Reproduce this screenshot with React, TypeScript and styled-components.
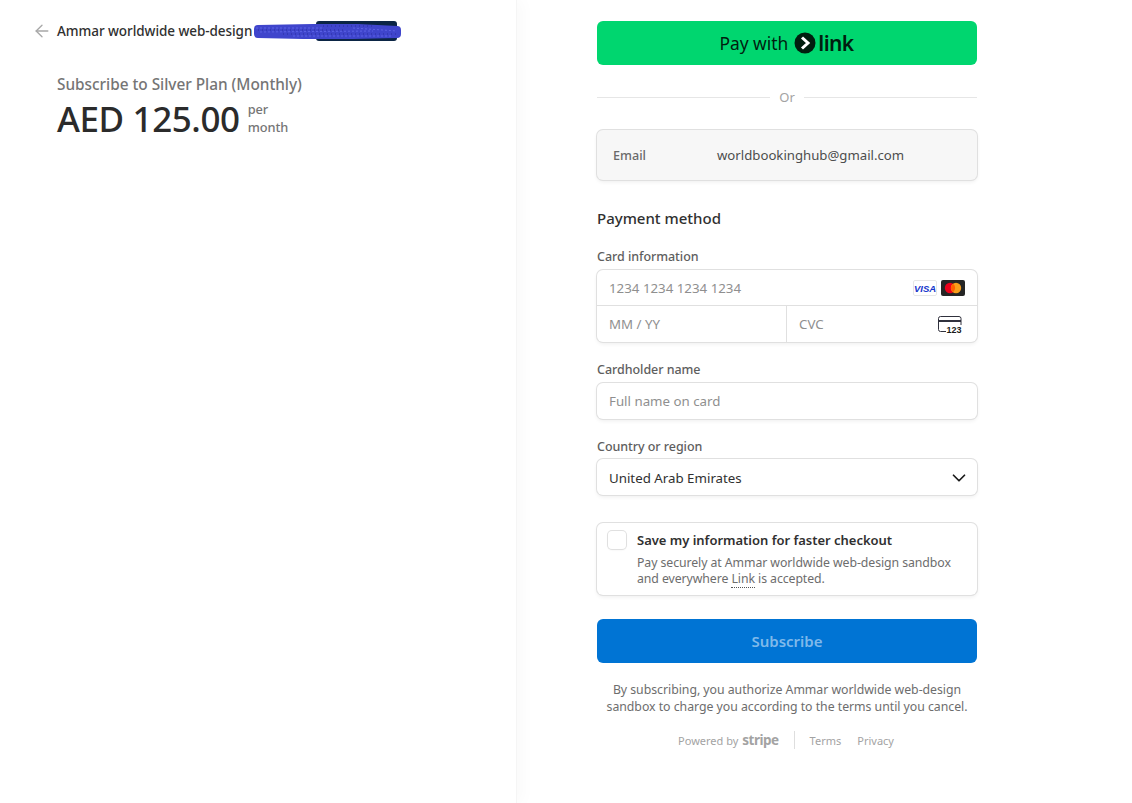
import styled, { createGlobalStyle } from "styled-components";
import { ArrowLeft, ChevronDown } from "lucide-react";

const GlobalStyle = createGlobalStyle`
	html, body {
		margin: 0;
		padding: 0;
		background: #fff;
		font-family: "Noto Sans", "Open Sans", sans-serif;
		-webkit-font-smoothing: antialiased;
	}
	* {
		box-sizing: border-box;
	}
`;

const Page = styled.div`
	display: flex;
	width: 1132px;
	height: 803px;
	overflow: hidden;
`;

const Summary = styled.aside`
	width: 517px;
	flex: none;
	padding: 21px 0 0 32px;
	box-shadow: 6px 0 14px rgba(0, 0, 0, 0.022);
	border-right: 1px solid #f5f5f5;
`;

const Merchant = styled.div`
	display: flex;
	align-items: center;
	height: 20px;
	gap: 7px;
	color: #303030;
	font-size: 13.5px;
	font-weight: 500;
	letter-spacing: -0.06px;
	white-space: nowrap;
`;

const BackIcon = styled(ArrowLeft)`
	color: #a8a8a8;
	flex: none;
	margin-right: -2px;
`;

const Scribble = styled.svg`
	flex: none;
	margin-left: -6px;
`;

const Product = styled.div`
	margin: 33px 0 0 25px;
`;

const ProductName = styled.div`
	color: #757575;
	font-size: 15.4px;
	font-weight: 500;
	line-height: 22px;
	letter-spacing: -0.03px;
`;

const PriceRow = styled.div`
	display: flex;
	align-items: center;
	gap: 8px;
	margin-top: 4px;
`;

const Price = styled.div`
	color: #2b2b2b;
	font-size: 35px;
	font-weight: 500;
	line-height: 38px;
	letter-spacing: -0.4px;
`;

const Per = styled.div`
	color: #757575;
	font-size: 12.8px;
	font-weight: 500;
	line-height: 18px;
	letter-spacing: -0.1px;
	width: 44px;
	margin-top: -2px;
`;

const Main = styled.main`
	flex: 1;
	padding: 21px 0 0 80px;
`;

const Column = styled.div`
	display: flex;
	flex-direction: column;
	width: 380px;
`;

const LinkButton = styled.div`
	display: flex;
	align-items: center;
	justify-content: center;
	gap: 6px;
	height: 44px;
	border-radius: 6px;
	background: #00d66f;
	color: #011e0f;
	font-size: 17.4px;
	padding-right: 1px;
`;

const LinkWord = styled.span`
	font-size: 21px;
	font-weight: 600;
	letter-spacing: -0.6px;
	line-height: 24px;
	margin-left: -4px;
`;

const Divider = styled.div`
	display: flex;
	align-items: center;
	gap: 9px;
	height: 20px;
	margin-top: 22px;
	color: #a3a3a3;
	font-size: 13px;
	&::before,
	&::after {
		content: "";
		flex: 1;
		height: 1px;
		background: #e6e6e6;
	}
`;

const EmailBox = styled.div`
	display: flex;
	align-items: center;
	height: 50px;
	margin-top: 23px;
	padding: 0 16px;
	border-radius: 6px;
	background: #f7f7f7;
	box-shadow: 0 0 0 1px #e0e0e0, 0 2px 4px rgba(0, 0, 0, 0.07);
	font-size: 13.2px;
	color: #4d4d4d;
`;

const EmailLabel = styled.span`
	width: 104px;
	font-size: 12.6px;
	font-weight: 500;
	color: #6a6a6a;
`;

const SectionTitle = styled.h2`
	margin: 27px 0 0;
	color: #303030;
	font-size: 15px;
	font-weight: 500;
	line-height: 22px;
`;

const FieldLabel = styled.label<{ $top: number; $bottom: number }>`
	display: block;
	margin-top: ${(props) => props.$top}px;
	margin-bottom: ${(props) => props.$bottom}px;
	color: #5e5e5e;
	font-size: 12.5px;
	font-weight: 500;
	line-height: 18px;
	letter-spacing: -0.05px;
`;

const InputGroup = styled.div`
	border-radius: 6px;
	background: #fff;
	box-shadow: 0 0 0 1px #e0e0e0, 0 2px 4px rgba(0, 0, 0, 0.07);
`;

const InputRow = styled.div`
	display: flex;
	align-items: center;
	justify-content: space-between;
	height: 36px;
	padding: 0 12px;
	font-size: 13.3px;
`;

const CardNumberRow = styled(InputRow)`
	height: 35px;
`;

const SplitRow = styled.div`
	display: grid;
	grid-template-columns: 189px 191px;
	border-top: 1px solid #e0e0e0;
`;

const SplitCell = styled(InputRow)`
	& + & {
		border-left: 1px solid #e0e0e0;
	}
`;

const Placeholder = styled.span`
	color: #8f8f8f;
`;

const SelectValue = styled.span`
	color: #303030;
	padding-top: 2px;
`;

const Brands = styled.div`
	display: flex;
	gap: 4px;
`;

const CvcIcon = styled.svg`
	margin-right: 3px;
`;

const SelectChevron = styled(ChevronDown)`
	color: #1a1a1a;
	margin: 2px -5px 0 0;
`;

const SaveBox = styled.div`
	display: flex;
	margin-top: 28px;
	height: 72px;
	padding: 8px 11px;
	gap: 11px;
	border-radius: 6px;
	box-shadow: 0 0 0 1px #e0e0e0, 0 2px 4px rgba(0, 0, 0, 0.07);
`;

const Checkbox = styled.span`
	width: 18px;
	height: 18px;
	flex: none;
	border-radius: 4px;
	background: #fff;
	box-shadow: 0 0 0 1px #e0e0e0, 0 1px 2px rgba(0, 0, 0, 0.08);
`;

const SaveTitle = styled.div`
	color: #303030;
	font-size: 13px;
	font-weight: 600;
	line-height: 18px;
	letter-spacing: -0.02px;
`;

const SaveText = styled.div`
	margin-top: 6px;
	color: #6d6d6d;
	font-size: 12.3px;
	line-height: 16px;
	letter-spacing: -0.08px;
	white-space: nowrap;
`;

const DottedLink = styled.span`
	border-bottom: 1px dotted #555;
`;

const SubscribeButton = styled.div`
	display: flex;
	align-items: center;
	justify-content: center;
	height: 44px;
	margin-top: 24px;
	border-radius: 6px;
	background: #0074d4;
	color: #7fb9ea;
	font-size: 15px;
	font-weight: 600;
`;

const Terms = styled.p`
	margin: 18px 0 0;
	color: #6d6d6d;
	font-size: 12.3px;
	line-height: 17px;
	text-align: center;
	letter-spacing: -0.03px;
	white-space: nowrap;
`;

const Footer = styled.div`
	display: flex;
	align-items: center;
	justify-content: center;
	margin-top: 16px;
	padding-right: 2px;
	color: #a3a3a3;
	font-size: 11px;
`;

const Stripe = styled.span`
	margin-left: 4px;
	font-weight: 700;
	font-size: 13.5px;
	letter-spacing: -0.5px;
	line-height: 16px;
`;

const FooterRule = styled.span`
	width: 1px;
	height: 18px;
	margin: 0 15px;
	background: #dedede;
`;

const FooterLink = styled.span`
	& + & {
		margin-left: 16px;
	}
`;

function App() {
	return (
		<>
			<GlobalStyle />
			<Page>
				<Summary>
					<Merchant>
						<BackIcon size={20} strokeWidth={1.6} />
						<span>Ammar worldwide web-design</span>
						<Scribble width="150" height="22" viewBox="0 0 150 22">
							<rect x="63" y="1" width="81" height="20" rx="3" fill="#0b2545" />
							<path
								d="M5 9 L60 8 L105 8 L144 10 L144 14 L100 15 L50 15 L5 14 Z"
								fill="#3f45cc"
								stroke="#3f45cc"
								strokeWidth="8"
								strokeLinejoin="round"
							/>
							<path d="M3 8 H70 M7 12 L120 11 M40 16 H138 M100 8 L144 11" fill="none" stroke="#5d63e4" strokeWidth="1" strokeDasharray="2 2" />
							<path d="M5 10 H90 M30 14 L144 14 M70 6 H120" fill="none" stroke="#2a2f9e" strokeWidth="1" strokeDasharray="1 3" />
						</Scribble>
					</Merchant>
					<Product>
						<ProductName>Subscribe to Silver Plan (Monthly)</ProductName>
						<PriceRow>
							<Price>AED 125.00</Price>
							<Per>per month</Per>
						</PriceRow>
					</Product>
				</Summary>
				<Main>
					<Column>
						<LinkButton>
							<span>Pay with</span>
							<svg width="22" height="22" viewBox="0 0 22 22">
								<circle cx="11" cy="11" r="10.5" fill="#011e0f" />
								<path d="M8 5.5 L14 11 L8 16.5" fill="none" stroke="#fff" strokeWidth="3" />
							</svg>
							<LinkWord>link</LinkWord>
						</LinkButton>
						<Divider>Or</Divider>
						<EmailBox>
							<EmailLabel>Email</EmailLabel>
							<span>worldbookinghub@gmail.com</span>
						</EmailBox>
						<SectionTitle>Payment method</SectionTitle>
						<FieldLabel $top={19} $bottom={4}>Card information</FieldLabel>
						<InputGroup>
							<CardNumberRow>
								<Placeholder>1234 1234 1234 1234</Placeholder>
								<Brands>
									<svg width="24" height="16" viewBox="0 0 24 16">
										<rect x="0.5" y="0.5" width="23" height="15" rx="1.5" fill="#fff" stroke="#e6e6e6" />
										<text x="12" y="11.5" textAnchor="middle" fontFamily="Liberation Sans" fontSize="9.5" fontStyle="italic" fontWeight="700" fill="#1434cb">
											VISA
										</text>
									</svg>
									<svg width="24" height="16" viewBox="0 0 24 16">
										<rect width="24" height="16" rx="2" fill="#252525" />
										<circle cx="9" cy="8" r="5.2" fill="#eb001b" />
										<circle cx="15" cy="8" r="5.2" fill="#f79e1b" />
										<path d="M12 3.8 a5.2 5.2 0 0 1 0 8.4 a5.2 5.2 0 0 1 0 -8.4" fill="#ff5f00" />
									</svg>
								</Brands>
							</CardNumberRow>
							<SplitRow>
								<SplitCell>
									<Placeholder>MM / YY</Placeholder>
								</SplitCell>
								<SplitCell>
									<Placeholder>CVC</Placeholder>
									<CvcIcon width="24" height="17" viewBox="0 0 24 17">
										<path d="M8 15.5 H2.5 a2 2 0 0 1 -2 -2 V2.5 a2 2 0 0 1 2 -2 H21 a2 2 0 0 1 2 2 V9" fill="none" stroke="#30313d" strokeWidth="1" />
										<rect x="1" y="4" width="22" height="2" fill="#30313d" />
										<text x="23.5" y="16.5" textAnchor="end" fontFamily="Liberation Sans" fontSize="9" fontWeight="700" fill="#1a1a1a">
											123
										</text>
									</CvcIcon>
								</SplitCell>
							</SplitRow>
						</InputGroup>
						<FieldLabel $top={19} $bottom={4}>Cardholder name</FieldLabel>
						<InputGroup>
							<InputRow>
								<Placeholder>Full name on card</Placeholder>
							</InputRow>
						</InputGroup>
						<FieldLabel $top={19} $bottom={3}>Country or region</FieldLabel>
						<InputGroup>
							<InputRow>
								<SelectValue>United Arab Emirates</SelectValue>
								<SelectChevron size={22} strokeWidth={1.9} />
							</InputRow>
						</InputGroup>
						<SaveBox>
							<Checkbox />
							<div>
								<SaveTitle>Save my information for faster checkout</SaveTitle>
								<SaveText>
									Pay securely at Ammar worldwide web-design sandbox
									<br />
									and everywhere <DottedLink>Link</DottedLink> is accepted.
								</SaveText>
							</div>
						</SaveBox>
						<SubscribeButton>Subscribe</SubscribeButton>
						<Terms>
							By subscribing, you authorize Ammar worldwide web-design
							<br />
							sandbox to charge you according to the terms until you cancel.
						</Terms>
						<Footer>
							<span>Powered by</span>
							<Stripe>stripe</Stripe>
							<FooterRule />
							<FooterLink>Terms</FooterLink>
							<FooterLink>Privacy</FooterLink>
						</Footer>
					</Column>
				</Main>
			</Page>
		</>
	);
}

export default App;
